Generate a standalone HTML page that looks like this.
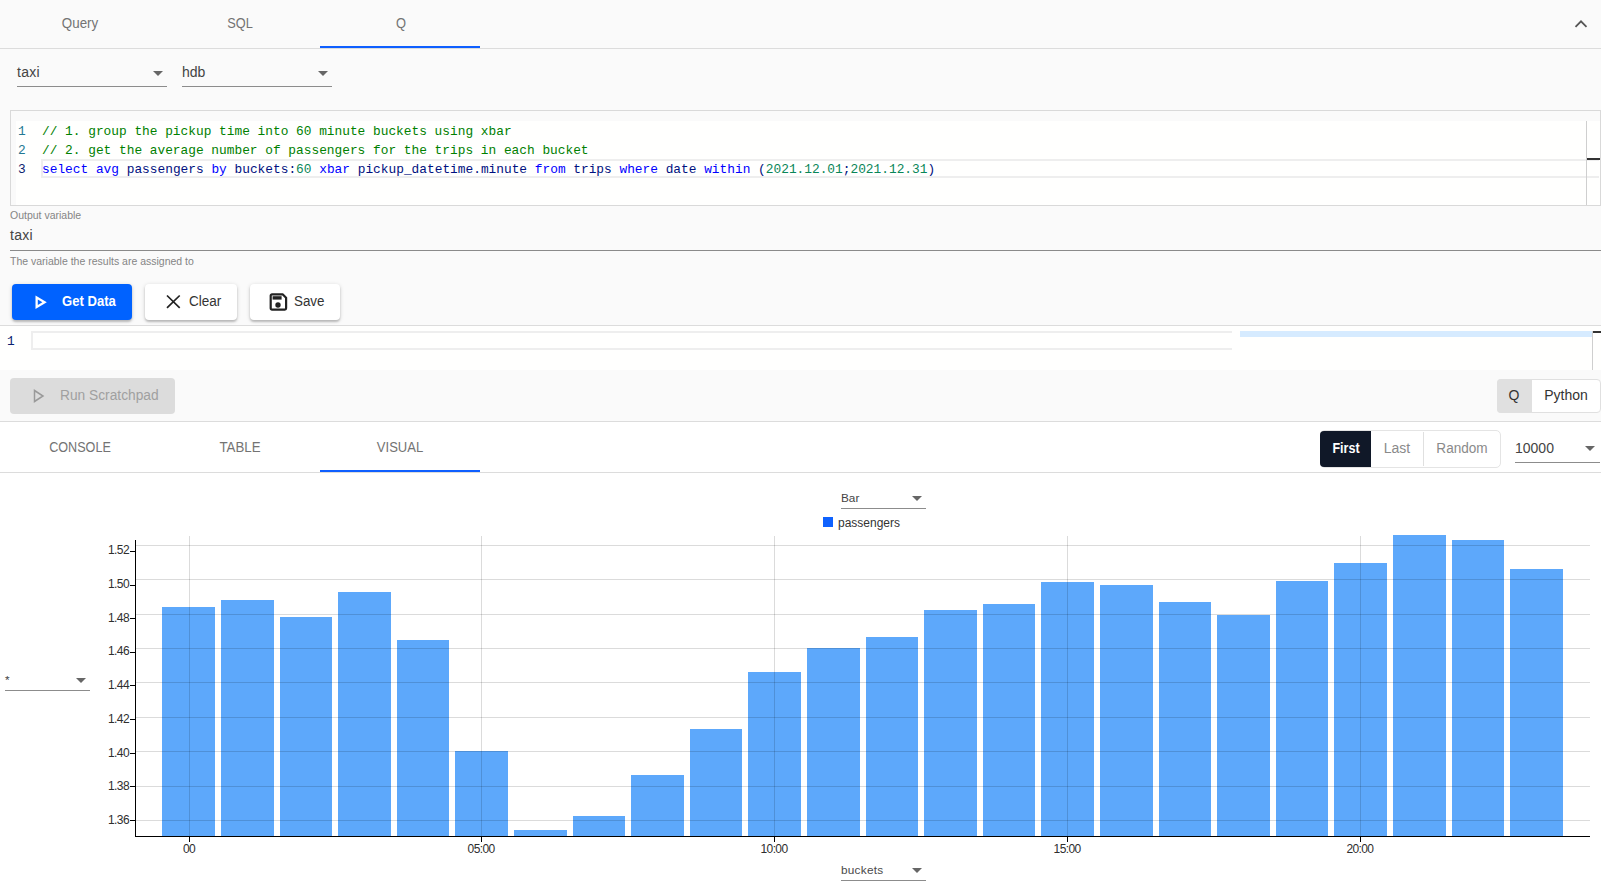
<!DOCTYPE html>
<html lang="en">
<head>
<meta charset="utf-8">
<title>Q Query</title>
<style>
*{box-sizing:border-box;margin:0;padding:0}
html,body{width:1601px;height:883px;overflow:hidden;background:#fff}
body{font-family:"Liberation Sans",sans-serif;color:#333;position:relative;font-size:14px}
.abs{position:absolute}
.t{position:absolute;white-space:nowrap;line-height:1}
.c{transform:translateX(-50%)}
.l{transform-origin:0 50%}
.mono{font-family:"Liberation Mono",monospace;font-size:12.83px;white-space:pre}
.top{position:absolute;left:0;top:0;width:1601px;height:421px;background:#fafafa}
.hl{position:absolute;height:1px;background:#dcdcdc}
.tab{color:#737373;font-size:14px}
.sel-line{position:absolute;height:1px;background:#8c8c8c}
.arrow{position:absolute;width:0;height:0;border-left:5px solid transparent;border-right:5px solid transparent;border-top:5px solid #666}
.cm{color:#008000}.kw{color:#0000ff}.nm{color:#098658}.id{color:#001080}
.ln{position:absolute;margin-top:1px;font-family:"Liberation Mono",monospace;font-size:12.83px;color:#237893;line-height:19px}
.code{position:absolute;margin-top:1px;left:42px;line-height:19px;height:19px}
.btn{position:absolute;height:36px;border-radius:4px;box-shadow:0 2px 2px rgba(0,0,0,.18),0 1px 4px rgba(0,0,0,.16)}
</style>
</head>
<body>
<!-- TOP PANEL -->
<div class="top"></div>
<div class="t tab c" style="left:80px;top:16px;transform:translateX(-50%) scaleX(.955)">Query</div>
<div class="t tab c" style="left:240px;top:16px;transform:translateX(-50%) scaleX(.91)">SQL</div>
<div class="t tab c" style="left:400.5px;top:16px;transform:translateX(-50%) scaleX(.92)">Q</div>
<div class="hl" style="left:0;top:48px;width:1601px"></div>
<div class="abs" style="left:320px;top:46px;width:160px;height:2px;background:#0f5fff"></div>
<svg class="abs" style="left:1572px;top:15px" width="18" height="18" viewBox="0 0 18 18"><path d="M3.5 11.8 L9 6.3 L14.5 11.8" fill="none" stroke="#555" stroke-width="1.8"/></svg>

<!-- selects -->
<div class="t" style="left:17px;top:65px;color:#444;letter-spacing:.25px">taxi</div>
<div class="arrow" style="left:153px;top:71px"></div>
<div class="sel-line" style="left:17px;top:86px;width:150px"></div>
<div class="t" style="left:182px;top:65px;color:#444">hdb</div>
<div class="arrow" style="left:318px;top:71px"></div>
<div class="sel-line" style="left:182px;top:86px;width:150px"></div>

<!-- editor -->
<div class="abs" style="left:10px;top:110px;width:1591px;height:96px;border:1px solid #d9d9d9;background:#fafafa"></div>
<div class="abs" style="left:16px;top:121px;width:1584px;height:84px;background:#fffffe"></div>
<div class="abs" style="left:41px;top:159px;width:1558px;height:19px;border:2px solid #eeeeee;border-right:0"></div>
<div class="abs" style="left:1586px;top:121px;width:1px;height:84px;background:#cfcfcf"></div>
<div class="abs" style="left:1587px;top:158px;width:13px;height:2px;background:#333"></div>
<div class="ln" style="left:18px;top:121px">1</div>
<div class="ln" style="left:18px;top:140px">2</div>
<div class="ln" style="left:18px;top:159px;color:#0b216f">3</div>
<div class="code mono cm" style="top:121px">// 1. group the pickup time into 60 minute buckets using xbar</div>
<div class="code mono cm" style="top:140px">// 2. get the average number of passengers for the trips in each bucket</div>
<div class="code mono id" style="top:159px"><span class="kw">select</span> <span class="kw">avg</span> passengers <span class="kw">by</span> buckets:<span class="nm">60</span> <span class="kw">xbar</span> pickup_datetime.minute <span class="kw">from</span> trips <span class="kw">where</span> date <span class="kw">within</span> (<span class="nm">2021.12.01</span>;<span class="nm">2021.12.31</span>)</div>

<!-- output variable -->
<div class="t" style="left:10px;top:210px;font-size:10.5px;color:#858585">Output variable</div>
<div class="t" style="left:10px;top:228px;font-size:14px;color:#444;letter-spacing:.25px">taxi</div>
<div class="abs" style="left:10px;top:250px;width:1591px;height:1px;background:#8a8a8a"></div>
<div class="t" style="left:10px;top:256px;font-size:10.5px;color:#858585">The variable the results are assigned to</div>

<!-- buttons -->
<div class="btn" style="left:12px;top:284px;width:120px;background:#0062ff"></div>
<svg class="abs" style="left:30px;top:290px" width="24" height="24" viewBox="30 290 24 24"><path d="M35.5 295.4 L46.8 302.15 L35.5 308.9 Z M37.8 299.4 L37.8 304.9 L42.4 302.15 Z" fill="#fff" fill-rule="evenodd"/></svg>
<div class="t l" style="left:62px;top:294px;font-size:14px;font-weight:bold;color:#fff;transform:scaleX(.935)">Get Data</div>
<div class="btn" style="left:145px;top:284px;width:92px;background:#fff"></div>
<svg class="abs" style="left:163px;top:291px" width="22" height="22" viewBox="163 291 22 22"><path d="M167 295.5 L179.7 307.9 M179.7 295.5 L167 307.9" fill="none" stroke="#222" stroke-width="1.7"/></svg>
<div class="t l" style="left:189px;top:294px;font-size:14px;color:#333;transform:scaleX(.965)">Clear</div>
<div class="btn" style="left:250px;top:284px;width:90px;background:#fff"></div>
<svg class="abs" style="left:268px;top:291px" width="22" height="22" viewBox="268 291 22 22"><path d="M272 294.3 H282.6 L286.1 297.8 V308.3 a1.3 1.3 0 0 1 -1.3 1.3 H272 a1.3 1.3 0 0 1 -1.3 -1.3 V295.6 a1.3 1.3 0 0 1 1.3 -1.3 Z" fill="none" stroke="#222" stroke-width="2.2" stroke-linejoin="round"/><rect x="272.6" y="296.2" width="9" height="3.4" fill="#222"/><circle cx="278" cy="305" r="2.7" fill="#222"/></svg>
<div class="t l" style="left:294px;top:294px;font-size:14px;color:#333;transform:scaleX(.955)">Save</div>

<!-- scratchpad -->
<div class="hl" style="left:0;top:325px;width:1601px"></div>
<div class="abs" style="left:0;top:326px;width:1601px;height:44px;background:#fffffe"></div>
<div class="ln" style="left:7px;top:331px;color:#0b216f">1</div>
<div class="abs" style="left:31px;top:331px;width:1201px;height:19px;border:2px solid #eeeeee;border-right:0"></div>
<div class="abs" style="left:1240px;top:331px;width:352px;height:6px;background:#d6ebff"></div>
<div class="abs" style="left:1592px;top:331px;width:1px;height:39px;background:#cfcfcf"></div>
<div class="abs" style="left:1593px;top:331px;width:8px;height:2px;background:#333"></div>

<div class="abs" style="left:10px;top:378px;width:165px;height:36px;border-radius:4px;background:#dcdcdc"></div>
<svg class="abs" style="left:29px;top:386px" width="20" height="20" viewBox="0 0 20 20"><path d="M5.5 4.5 L14 10 L5.5 15.5 Z" fill="none" stroke="#9a9a9a" stroke-width="1.5"/></svg>
<div class="t l" style="left:60px;top:388px;font-size:14px;color:#a0a0a0;transform:scaleX(.982)">Run Scratchpad</div>

<div class="abs" style="left:1497px;top:379px;width:104px;height:34px;border-radius:4px;background:#fff;border:1px solid #e0e0e0"></div>
<div class="abs" style="left:1497px;top:379px;width:35px;height:34px;border-radius:4px 0 0 4px;background:#e0e0e0"></div>
<div class="t c" style="left:1514px;top:388px;font-size:14px;color:#333">Q</div>
<div class="t c" style="left:1566px;top:388px;font-size:14px;color:#333">Python</div>
<div class="hl" style="left:0;top:421px;width:1601px"></div>

<!-- RESULT TABS -->
<div class="t tab c" style="left:80px;top:440px;transform:translateX(-50%) scaleX(.90)">CONSOLE</div>
<div class="t tab c" style="left:240px;top:440px;transform:translateX(-50%) scaleX(.95)">TABLE</div>
<div class="t tab c" style="left:400px;top:440px;transform:translateX(-50%) scaleX(.93)">VISUAL</div>
<div class="hl" style="left:0;top:472px;width:1601px"></div>
<div class="abs" style="left:320px;top:470px;width:160px;height:2px;background:#0f5fff"></div>

<div class="abs" style="left:1320px;top:430px;width:181px;height:38px;border-radius:5px;border:1px solid #e4e4e4;background:#fff"></div>
<div class="abs" style="left:1320px;top:431px;width:51px;height:36px;border-radius:4px 0 0 4px;background:#101828"></div>
<div class="abs" style="left:1423px;top:432px;width:1px;height:34px;background:#e0e0e0"></div>
<div class="t c" style="left:1345.5px;top:441px;font-size:14px;font-weight:bold;color:#fff;transform:translateX(-50%) scaleX(.895)">First</div>
<div class="t c" style="left:1397px;top:441px;font-size:14px;color:#8a8a8a">Last</div>
<div class="t c" style="left:1461.5px;top:441px;font-size:14px;color:#8a8a8a;transform:translateX(-50%) scaleX(.97)">Random</div>
<div class="t" style="left:1515px;top:441px;font-size:14px;color:#444">10000</div>
<div class="arrow" style="left:1585px;top:446px"></div>
<div class="sel-line" style="left:1515px;top:462px;width:85px"></div>

<!-- CHART -->
<!--CHART-->
<svg class="abs" style="left:0;top:473px" width="1601" height="410" viewBox="0 473 1601 410" shape-rendering="crispEdges" font-family="'Liberation Sans',sans-serif">
<g fill="#5da8fb">
<rect x="162.3" y="607.2" width="52.7" height="228.8"/>
<rect x="220.9" y="599.9" width="52.7" height="236.1"/>
<rect x="279.5" y="616.8" width="52.7" height="219.2"/>
<rect x="338.1" y="592.3" width="52.7" height="243.7"/>
<rect x="396.7" y="640.4" width="52.7" height="195.6"/>
<rect x="455.3" y="750.5" width="52.7" height="85.5"/>
<rect x="513.9" y="830.1" width="52.7" height="5.9"/>
<rect x="572.5" y="815.8" width="52.7" height="20.2"/>
<rect x="631.1" y="774.6" width="52.7" height="61.4"/>
<rect x="689.7" y="729.2" width="52.7" height="106.8"/>
<rect x="748.3" y="671.8" width="52.7" height="164.2"/>
<rect x="806.9" y="648.0" width="52.7" height="188.0"/>
<rect x="865.5" y="636.7" width="52.7" height="199.3"/>
<rect x="924.1" y="609.9" width="52.7" height="226.1"/>
<rect x="982.7" y="603.9" width="52.7" height="232.1"/>
<rect x="1041.3" y="582.0" width="52.7" height="254.0"/>
<rect x="1099.9" y="584.6" width="52.7" height="251.4"/>
<rect x="1158.5" y="602.4" width="52.7" height="233.6"/>
<rect x="1217.1" y="614.8" width="52.7" height="221.2"/>
<rect x="1275.7" y="580.9" width="52.7" height="255.1"/>
<rect x="1334.3" y="563.4" width="52.7" height="272.6"/>
<rect x="1392.9" y="534.9" width="52.7" height="301.1"/>
<rect x="1451.5" y="540.0" width="52.7" height="296.0"/>
<rect x="1510.1" y="569.1" width="52.7" height="266.9"/>
</g>
<g stroke="#000" stroke-opacity="0.14" stroke-width="1">
<line x1="136" x2="1589.5" y1="820.4" y2="820.4"/>
<line x1="136" x2="1589.5" y1="786.0" y2="786.0"/>
<line x1="136" x2="1589.5" y1="751.6" y2="751.6"/>
<line x1="136" x2="1589.5" y1="717.2" y2="717.2"/>
<line x1="136" x2="1589.5" y1="682.8" y2="682.8"/>
<line x1="136" x2="1589.5" y1="648.4" y2="648.4"/>
<line x1="136" x2="1589.5" y1="614.0" y2="614.0"/>
<line x1="136" x2="1589.5" y1="579.6" y2="579.6"/>
<line x1="136" x2="1589.5" y1="545.2" y2="545.2"/>
<line x1="189.5" x2="189.5" y1="535.5" y2="836"/>
<line x1="481.6" x2="481.6" y1="535.5" y2="836"/>
<line x1="774.5" x2="774.5" y1="535.5" y2="836"/>
<line x1="1067.6" x2="1067.6" y1="535.5" y2="836"/>
<line x1="1360.4" x2="1360.4" y1="535.5" y2="836"/>
</g>
<g stroke="#000" stroke-width="1.5">
<line x1="135.7" x2="135.7" y1="539.5" y2="837"/>
<line x1="135" x2="1589.5" y1="836.3" y2="836.3"/>
</g>
<g stroke="#000" stroke-width="1">
<line x1="129.5" x2="135" y1="820.2" y2="820.2"/>
<line x1="129.5" x2="135" y1="786.6" y2="786.6"/>
<line x1="129.5" x2="135" y1="753.0" y2="753.0"/>
<line x1="129.5" x2="135" y1="719.4" y2="719.4"/>
<line x1="129.5" x2="135" y1="685.8" y2="685.8"/>
<line x1="129.5" x2="135" y1="652.2" y2="652.2"/>
<line x1="129.5" x2="135" y1="618.6" y2="618.6"/>
<line x1="129.5" x2="135" y1="585.0" y2="585.0"/>
<line x1="129.5" x2="135" y1="551.4" y2="551.4"/>
<line x1="189.5" x2="189.5" y1="836" y2="842"/>
<line x1="481.6" x2="481.6" y1="836" y2="842"/>
<line x1="774.5" x2="774.5" y1="836" y2="842"/>
<line x1="1067.6" x2="1067.6" y1="836" y2="842"/>
<line x1="1360.4" x2="1360.4" y1="836" y2="842"/>
</g>
<g font-size="12" fill="#2e2e2e" text-anchor="end" shape-rendering="auto" letter-spacing="-0.6">
<text x="129" y="824.1">1.36</text>
<text x="129" y="790.3">1.38</text>
<text x="129" y="756.6">1.40</text>
<text x="129" y="722.8">1.42</text>
<text x="129" y="689.1">1.44</text>
<text x="129" y="655.3">1.46</text>
<text x="129" y="621.6">1.48</text>
<text x="129" y="587.8">1.50</text>
<text x="129" y="554.1">1.52</text>
</g>
<g font-size="12" fill="#2e2e2e" text-anchor="middle" letter-spacing="-0.6">
<text x="189.0" y="853.2">00</text>
<text x="481.1" y="853.2">05:00</text>
<text x="774.0" y="853.2">10:00</text>
<text x="1067.1" y="853.2">15:00</text>
<text x="1359.9" y="853.2">20:00</text>
</g>
</svg>
<div class="t" style="left:841px;top:492.6px;font-size:11.8px;color:#444">Bar</div>
<div class="arrow" style="left:912px;top:496px"></div>
<div class="sel-line" style="left:841px;top:508px;width:85px"></div>
<div class="abs" style="left:823px;top:517px;width:10px;height:10px;background:#0f62fe"></div>
<div class="t" style="left:838px;top:517.4px;font-size:12px;color:#333">passengers</div>
<div class="t" style="left:5px;top:675px;font-size:11.8px;color:#444">*</div>
<div class="arrow" style="left:76px;top:678px"></div>
<div class="sel-line" style="left:5px;top:690px;width:85px"></div>
<div class="t" style="left:841px;top:864.6px;font-size:11.8px;letter-spacing:.25px;color:#4a4a4a">buckets</div>
<div class="arrow" style="left:912px;top:868px"></div>
<div class="sel-line" style="left:841px;top:880px;width:85px"></div>
<!--/CHART-->
</body>
</html>
